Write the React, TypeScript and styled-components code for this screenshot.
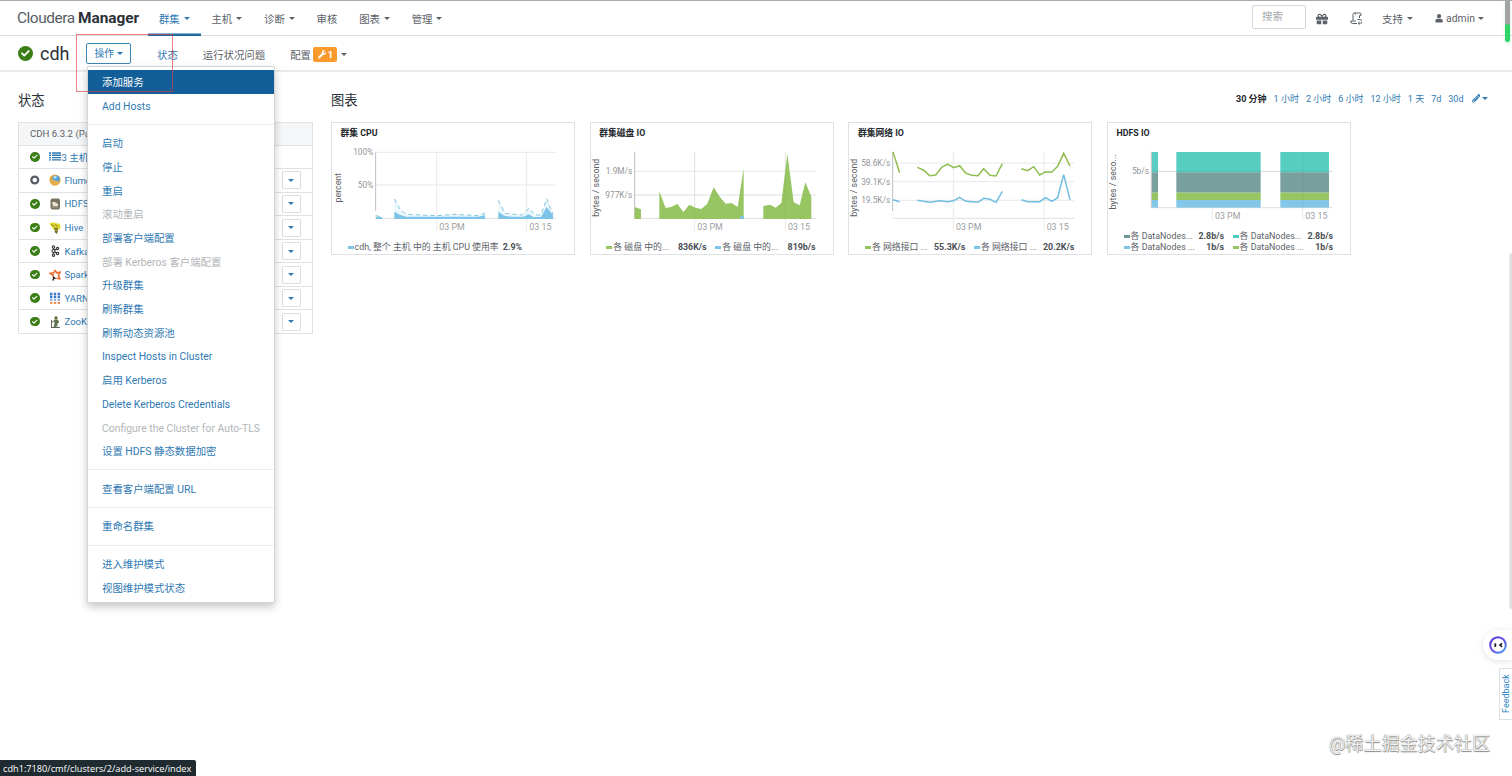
import React from "react";
import styled, { createGlobalStyle, css } from "styled-components";
import { FaGift, FaCheck, FaUser, FaPencilAlt, FaWrench } from "react-icons/fa";

const Global = createGlobalStyle`
  * { box-sizing: border-box; }
  body {
    margin: 0;
    background: #fff;
    font-family: Roboto, "Noto Sans CJK SC", sans-serif;
    font-size: 10.4px;
    color: #5c6268;
    overflow: hidden;
  }
`;

const blue = "#2f79b2";

const Page = styled.div`
  position: relative;
  width: 1512px;
  height: 776px;
  overflow: hidden;
  border-top: 1px solid #a9a9a9;
`;

const Caret = styled.i<{ $color?: string; $gap?: number }>`
  display: inline-block;
  flex: none;
  margin-left: ${(p) => p.$gap ?? 4}px;
  border: 3px solid transparent;
  border-top-color: ${(p) => p.$color ?? "currentColor"};
  border-bottom: 0;
`;

/* ---- top bar ---- */
const TopBar = styled.header`
  display: flex;
  align-items: stretch;
  height: 35px;
  border-bottom: 1px solid #dcdcdc;
  padding-left: 17px;
`;
const Brand = styled.div`
  width: 131px;
  padding-top: 1px;
  line-height: 33px;
  font-size: 15.4px;
  letter-spacing: -0.45px;
  color: #555c63;
  white-space: nowrap;
  b { color: #2b3138; font-weight: 700; letter-spacing: 0; }
`;
const NavItem = styled.a<{ $active?: boolean }>`
  display: flex;
  align-items: center;
  padding: 0 10.9px;
  height: 35px;
  ${(p) => p.$active && css`
    color: ${blue};
    box-shadow: inset 0 -2.5px 0 #1c6ba3;
  `}
`;
const TopRight = styled.div`
  display: flex;
  align-items: center;
  margin-left: auto;
  padding-right: 28px;
`;
const Search = styled.div`
  width: 54px;
  height: 24px;
  margin: -2px 10px 0 0;
  border: 1px solid #d4d6d8;
  border-radius: 2px;
  padding-left: 9px;
  line-height: 22px;
  color: #a3a6a9;
`;
const Tool = styled.span<{ $w: number }>`
  display: flex;
  align-items: center;
  width: ${(p) => p.$w}px;
  padding-top: 1px;
  white-space: nowrap;
`;

/* ---- cluster bar ---- */
const ClusterBar = styled.div`
  display: flex;
  align-items: center;
  height: 36px;
  border-bottom: 2px solid #e9e9e9;
  padding-left: 18px;
`;
const Status = styled.span<{ $size: number }>`
  display: inline-flex;
  align-items: center;
  justify-content: center;
  flex: none;
  width: ${(p) => p.$size}px;
  height: ${(p) => p.$size}px;
  border-radius: 50%;
  background: #3b7d17;
  color: #fff;
  font-size: ${(p) => p.$size * 0.58}px;
`;
const Stopped = styled.svg`
  width: 9.5px;
  height: 10px;
  flex: none;
`;
const ClusterName = styled.h1`
  width: 46px;
  margin: 1px 0 0 7px;
  font-size: 18px;
  font-weight: 400;
  line-height: 30px;
  color: #2b3138;
`;
const ActionWrap = styled.div`
  position: relative;
  margin-right: 26px;
`;
const ActionButton = styled.div`
  display: flex;
  align-items: center;
  width: 45px;
  height: 21px;
  padding-left: 7.5px;
  border: 1px solid #3d86b8;
  border-radius: 2px;
  color: ${blue};
  font-size: 9.8px;
`;
const Tab = styled.span<{ $active?: boolean }>`
  display: flex;
  align-items: center;
  margin-right: 25px;
  padding-top: 3px;
  color: ${(p) => (p.$active ? blue : "#5c6268")};
`;
const WarnBadge = styled.span`
  display: inline-flex;
  align-items: center;
  justify-content: center;
  gap: 1.5px;
  width: 24px;
  height: 15px;
  margin-left: 2.5px;
  border-radius: 2px;
  background: #fb9a2c;
  color: #fff;
  font-weight: 700;
  font-size: 9.5px;
`;

/* ---- dropdown menu ---- */
const Menu = styled.div`
  position: absolute;
  z-index: 5;
  left: 1px;
  top: 23px;
  width: 188px;
  height: 537px;
  padding-top: 3.5px;
  background: #fff;
  border: 1px solid #d3d5d7;
  border-radius: 2px;
  box-shadow: 0 4px 9px rgba(0, 0, 0, 0.22);
`;
const MenuItem = styled.a<{ $state?: string }>`
  display: block;
  height: 23.7px;
  line-height: 25.6px;
  padding-left: 14px;
  white-space: nowrap;
  color: ${(p) => (p.$state === "off" ? "#b2b5b7" : p.$state === "on" ? "#fff" : blue)};
  background: ${(p) => (p.$state === "on" ? "#125e99" : "transparent")};
`;
const Divider = styled.div`
  height: 13.9px;
  padding-top: 6.5px;
  &::after { content: ""; display: block; height: 1px; background: #ebecec; }
`;

/* ---- body ---- */
const Body = styled.main`
  display: flex;
  gap: 18px;
  padding: 16px 0 0 18px;
`;
const Side = styled.section`
  width: 295px;
`;
const Heading = styled.h2`
  margin: 0;
  height: 34px;
  line-height: 25px;
  font-size: 13.3px;
  font-weight: 400;
  color: #2b3138;
`;
const Services = styled.div`
  border: 1px solid #e0e1e2;
  font-size: 9.6px;
`;
const ServicesHead = styled.div`
  height: 21.6px;
  line-height: 21px;
  padding-left: 11px;
  background: #f4f6f7;
`;
const ServiceRow = styled.div`
  display: flex;
  align-items: center;
  height: 23.55px;
  padding: 0 11.5px 0 11px;
  border-top: 1px solid #e0e1e2;
  color: ${blue};
  white-space: nowrap;
`;
const ServiceIcon = styled.svg`
  flex: none;
  width: 12px;
  height: 12px;
  margin: 0 4px 0 9px;
`;
const HostsIcon = styled.svg`
  flex: none;
  width: 12px;
  height: 9px;
  margin: 0 1px 0 9px;
`;
const RowButton = styled.span`
  display: flex;
  align-items: center;
  justify-content: center;
  width: 19px;
  height: 18px;
  margin-left: auto;
  border: 1px solid #dcdfe1;
  border-radius: 1px;
`;
const ChartsArea = styled.section`
  width: 1160px;
`;
const ChartsHead = styled.div`
  display: flex;
  justify-content: space-between;
`;
const Ranges = styled.div`
  display: flex;
  align-items: center;
  gap: 7px;
  height: 21px;
  padding-right: 3px;
  font-size: 9px;
  color: ${blue};
  white-space: nowrap;
  b { color: #23282d; }
  span { display: inline-flex; align-items: center; }
`;
const Cards = styled.div`
  display: grid;
  grid-template-columns: repeat(4, 244px);
  gap: 14.7px;
`;
const Card = styled.article`
  height: 133px;
  border: 1px solid #e0e1e2;
  display: flex;
  flex-direction: column;
`;
const CardTitle = styled.h3`
  margin: 0;
  height: 19px;
  line-height: 20px;
  padding-left: 8.5px;
  font-size: 8.8px;
  font-weight: 700;
  color: #23282d;
`;
const Plot = styled.svg`
  display: block;
  flex: none;
  width: 242px;
  font-family: Roboto, sans-serif;
`;
const Legend = styled.div<{ $left: number }>`
  display: grid;
  grid-template-columns: max-content max-content;
  column-gap: 8.5px;
  padding: 1px 0 0 ${(p) => p.$left}px;
  font-size: 8.9px;
  line-height: 11.2px;
  white-space: nowrap;
`;
const LegendItem = styled.span<{ $w?: number; $color: string }>`
  display: flex;
  align-items: center;
  width: ${(p) => (p.$w ? p.$w + "px" : "auto")};
  &::before {
    content: "";
    width: 6px;
    height: 3px;
    margin-right: 1px;
    background: ${(p) => p.$color};
  }
  b { margin-left: auto; padding-left: 4px; font-weight: 700; color: #4a4f55; }
`;

/* ---- overlays ---- */
const Highlight = styled.div`
  position: absolute;
  z-index: 6;
  left: 76px;
  top: 33px;
  width: 97px;
  height: 58px;
  border: 1px solid rgba(222, 60, 66, 0.65);
`;
const StatusUrl = styled.div`
  position: absolute;
  left: 0;
  bottom: 0;
  width: 196px;
  height: 16px;
  padding-left: 3px;
  border-radius: 0 2px 0 0;
  background: #1f2b31;
  color: #fff;
  font: 9.2px/17px "Open Sans", sans-serif;
  white-space: nowrap;
`;
const Watermark = styled.div`
  position: absolute;
  right: 22px;
  top: 729px;
  font-size: 18.1px;
  line-height: 27px;
  color: #f1f1f1;
  text-shadow: 0 0 1px #777, 0.5px 0.5px 1px #888;
  white-space: nowrap;
`;
const Assistant = styled.div`
  position: absolute;
  right: 0;
  top: 629px;
  width: 29px;
  height: 30px;
  padding: 6px 0 0 6px;
  border-radius: 15px 0 0 15px;
  background: #fff;
  box-shadow: 0 1px 6px rgba(0, 0, 0, 0.13);
`;
const Feedback = styled.div`
  position: absolute;
  right: -1px;
  top: 667px;
  width: 14px;
  height: 52px;
  display: flex;
  align-items: center;
  justify-content: center;
  border: 1px solid #dde0e3;
  background: #fff;
  color: #2e86c0;
  font-size: 9px;
  writing-mode: vertical-rl;
  transform: rotate(180deg);
`;
const Meter = styled.div`
  position: absolute;
  left: 1505px;
  top: 0;
  width: 5px;
  height: 41px;
  border-radius: 0 0 2px 2px;
  background: linear-gradient(#a3a3a3 23px, #2fd467 24px);
  box-shadow: 0 2px 3px rgba(120, 220, 150, 0.35);
`;
const ScrollThumb = styled.div`
  position: absolute;
  right: 0;
  top: 252px;
  width: 2px;
  height: 356px;
  border-radius: 2px 0 0 2px;
  background: #dedede;
  box-shadow: -1px 0 1px #ededed;
`;

const menu: (string | [string, string] | null)[] = [
  ["添加服务", "on"], "Add Hosts", null,
  "启动", "停止", "重启", ["滚动重启", "off"], "部署客户端配置", ["部署 Kerberos 客户端配置", "off"],
  "升级群集", "刷新群集", "刷新动态资源池", "Inspect Hosts in Cluster", "启用 Kerberos",
  "Delete Kerberos Credentials", ["Configure the Cluster for Auto-TLS", "off"], "设置 HDFS 静态数据加密", null,
  "查看客户端配置 URL", null,
  "重命名群集", null,
  "进入维护模式", "视图维护模式状态",
];

const services: [string, React.ReactNode][] = [
  ["Flume", <g key="f"><circle cx="6" cy="6" r="5.6" fill="#e3a33b" /><circle cx="7" cy="5.2" r="3.7" fill="#4aa3dc" /><path d="M1 7c3-3 5 1 9 0-1 3-3 4.500-5 4.500S1.500 9.500 1 7" fill="#e8b04c" /><path d="M4 3l3-1.500 1 1.500-2 2z" fill="#bfe3f5" /></g>],
  ["HDFS", <g key="h"><rect x="1.500" y="0.500" width="9.500" height="11" rx="2" fill="#7c7461" /><path d="M3 4h3l3 2v2H4z" fill="#e6e2d4" /><path d="M3 9h6" stroke="#b1a98f" /></g>],
  ["Hive", <g key="v"><path d="M0.300 1.500l4-1.200 3 1 3.500.5 1 3-1 2.500-3 .5-4-1-1.500-2.500z" fill="#e8dd35" /><path d="M2 2.500l4 2M6.500 2l1.500 2.500M9 3.500l1 1" stroke="#6d6a1c" strokeWidth=".8" fill="none" /><path d="M5 6l3.500-.5.500 2.500-1 4-2-1.500z" fill="#6d6a2a" /><path d="M5.500 8h3" stroke="#e8dd35" strokeWidth=".8" /></g>],
  ["Kafka", <g key="k" fill="#fff" stroke="#333" strokeWidth="1.100"><path d="M4.500 3v6M5 5.500l3-2M5 6.500l3 2" /><circle cx="4.500" cy="2" r="1.200" /><circle cx="4.500" cy="6" r="1.500" /><circle cx="4.500" cy="10.200" r="1.200" /><circle cx="8.600" cy="3.500" r="1.100" /><circle cx="8.600" cy="8.500" r="1.100" /></g>],
  ["Spark", <g key="s" fill="none" stroke="#ee6a2c" strokeWidth="1.500"><path d="M6.200 1l1.300 2.800 3.700-.6-1.800 3 1.400 3.600-3.400-.6M4 8.500l.2-2.500L.9 4.400l3.800-.6L6.200 1" /><path d="M4 11.500l.8-3 1.800 1.300" stroke="#222" strokeWidth="1.400" /></g>],
  ["YARN", <g key="y"><path d="M1 2h10M1 5h10" stroke="#3c78c8" strokeWidth="2.400" strokeDasharray="2.400 1.400" /><path d="M1 8h10" stroke="#8fb1dd" strokeWidth="2" strokeDasharray="2.400 1.400" /><path d="M1 10.800h10" stroke="#ed7d31" strokeWidth="1.800" strokeDasharray="2.400 1.400" /></g>],
  ["ZooKeeper", <g key="z"><circle cx="7" cy="1.800" r="1.500" fill="#6b5a2c" /><path d="M5 3.500h4l1 3-1.500 1V11.500H7.500V9l-1 2.500H4.500L5.500 8z" fill="#5d7350" /><path d="M2.500 4v7.500M2.500 6.500l3-2" stroke="#6d6a55" strokeWidth="1" /><path d="M2 11.500h9" stroke="#444" strokeWidth=".8" /></g>],
];

type Frame = { x0: number; x1: number; y0: number; base: number; v: number[]; ticks: [number, string][]; unit: string; unitX: number; unitY: number; axisEnd?: number };

/* Plots are drawn on a grid three times finer than the screen. */
const Axes = ({ f }: { f: Frame }) => (
  <g>
    {f.ticks.map(([y]) => <path key={y} d={`M${f.x0} ${y}H${f.x1}`} stroke="#e3e4e5" strokeWidth="3" opacity=".8" />)}
    {f.v.map((x) => <path key={x} d={`M${x} ${f.y0}V${f.base + 38}`} stroke="#e6e7e8" strokeWidth="3" opacity=".8" />)}
    <path d={`M${f.x0} ${f.base}H${f.x1}`} stroke="#dedfe0" strokeWidth="3" />
    <path d={`M${f.x0} ${f.y0}V${f.axisEnd ?? f.base}`} stroke="#bcbec0" strokeWidth="3" />
    {f.ticks.map(([y, t]) => <text key={t} x={f.x0 - 7} y={y + 9} textAnchor="end" fontSize="25" fill="#939699">{t}</text>)}
    <text x={f.v[0] + 8} y={f.base + 34} fontSize="26.500" fill="#9b9ea1">03 PM</text>
    <text x={f.v[1] + 8} y={f.base + 34} fontSize="26.500" fill="#9b9ea1">03 15</text>
    <text transform={`translate(${f.unitX} ${f.unitY}) rotate(-90)`} textAnchor="middle" fontSize="26.500" fill="#5c6166">{f.unit}</text>
  </g>
);

const green = "#96c561";
const sky = "#7ec4e8";

const Dashboard = () => (
  <Cards>
    <Card>
      <CardTitle>群集 CPU</CardTitle>
      <Plot viewBox="21 171 726 297" height={99}>
        <Axes f={{ x0: 152, x1: 693, y0: 202, base: 400, v: [335, 605], ticks: [[202, "100%"], [300, "50%"]], unit: "percent", unitX: 47, unitY: 308, axisEnd: 378 }} />
        <path d="M208 342L226 374 243 388 335 392 390 388 460 392 480 384V400H208zM520 346L540 385 590 390 612 370 630 390 648 390 665 341 684 388V400H520z" fill="#eaf8fc" />
        <path d="M152 395L172 397V402H152zM208 380L226 390 243 395H460L480 390V402H208zM520 380L538 392 560 395H595L611 388 625 396H648L665 366 684 390V402H520z" fill={sky} />
        <path d="M152 392L172 396M208 342L226 374 243 388 335 392 390 388 460 392 480 384M520 346L540 385 590 390 612 370 630 390 648 390 665 341 684 388" fill="none" stroke="#85c3dc" strokeWidth="3" strokeDasharray="13 9" />
      </Plot>
      <Legend $left={15.5}><LegendItem $color={sky}>cdh, 整个 主机 中的 主机 CPU 使用率 <b>2.9%</b></LegendItem></Legend>
    </Card>
    <Card>
      <CardTitle>群集磁盘 IO</CardTitle>
      <Plot viewBox="33 81 726 297" height={99}>
        <Axes f={{ x0: 164, x1: 708, y0: 110, base: 310, v: [344, 616], ticks: [[169, "1.9M/s"], [240, "977K/s"]], unit: "bytes / second", unitX: 56, unitY: 218 }} />
        <path d="M164 276L183 283V312H164zM238 229L257 279 274 276 292 266 310 291 328 269 346 278 364 282 382 266 401 217 419 245 437 266 455 264 473 276 491 160V312H238zM550 273L571 269 587 278 604 264 622 116 641 262 659 271 676 202 694 245V312H550z" fill={green} />
        <path d="M480 303H491V312H480z" fill={sky} />
        <path d="M616 110V310M344 110V310M164 240H708" stroke="#777" strokeWidth="2" opacity=".1" />
      </Plot>
      <Legend $left={15.5}>
        <LegendItem $w={100.5} $color={green}>各 磁盘 中的... <b>836K/s</b></LegendItem>
        <LegendItem $w={100.5} $color={sky}>各 磁盘 中的... <b>819b/s</b></LegendItem>
      </Legend>
    </Card>
    <Card>
      <CardTitle>群集网络 IO</CardTitle>
      <Plot viewBox="27 81 726 297" height={99}>
        <Axes f={{ x0: 158, x1: 702, y0: 110, base: 310, v: [340, 612], ticks: [[144, "58.6K/s"], [200, "39.1K/s"], [256, "19.5K/s"]], unit: "bytes / second", unitX: 52, unitY: 218, axisEnd: 288 }} />
        <path d="M159 111L179 173M232 157L250 165 269 182 287 180 305 157 323 147 341 158 359 152 377 174 395 181 414 182 431 161 450 181 468 183 487 146M544 161L563 167 581 155 599 180 617 170 635 172 653 154 671 115 690 153" fill="none" stroke="#90bd50" strokeWidth="4.500" />
        <path d="M159 254L179 260M232 256L250 259 270 262 300 257 323 260 341 257 359 247 377 259 414 262 431 250 450 253 468 262 487 229M544 254L563 260 599 260 617 248 635 259 653 248 671 179 690 254" fill="none" stroke="#70bde2" strokeWidth="4.500" />
      </Plot>
      <Legend $left={15.5}>
        <LegendItem $w={100.5} $color={green}>各 网络接口 ... <b>55.3K/s</b></LegendItem>
        <LegendItem $w={100.5} $color={sky}>各 网络接口 ... <b>20.2K/s</b></LegendItem>
      </Legend>
    </Card>
    <Card>
      <CardTitle>HDFS IO</CardTitle>
      <Plot viewBox="24 81 726 264" height={88}>
        <Axes f={{ x0: 154, x1: 698, y0: 110, base: 278, v: [337, 608], ticks: [[169, "5b/s"]], unit: "bytes / seco...", unitX: 48, unitY: 201 }} />
        {[[156, 18], [229, 253], [541, 146]].map(([x, w]) => (
          <g key={x}>
            <rect x={x} y="111" width={w} height="62" fill="#58cdc2" />
            <rect x={x} y="172" width={w} height="61" fill="#7aa09e" />
            <rect x={x} y="233" width={w} height="22" fill={green} />
            <rect x={x} y="255" width={w} height="23" fill="#84c6e8" />
          </g>
        ))}
        <path d="M608 110V278M154 169H698" stroke="#555" strokeWidth="2" opacity=".15" />
      </Plot>
      <Legend $left={15.5}>
        <LegendItem $w={100.5} $color="#6b9794">各 DataNodes... <b>2.8b/s</b></LegendItem>
        <LegendItem $w={100.5} $color="#4dc9bd">各 DataNodes... <b>2.8b/s</b></LegendItem>
        <LegendItem $w={100.5} $color={sky}>各 DataNodes ... <b>1b/s</b></LegendItem>
        <LegendItem $w={100.5} $color={green}>各 DataNodes ... <b>1b/s</b></LegendItem>
      </Legend>
    </Card>
  </Cards>
);

export default function App() {
  return (
    <Page>
      <Global />
      <TopBar>
        <Brand>Cloudera <b>Manager</b></Brand>
        <NavItem $active>群集<Caret /></NavItem>
        <NavItem>主机<Caret /></NavItem>
        <NavItem>诊断<Caret /></NavItem>
        <NavItem>审核</NavItem>
        <NavItem>图表<Caret /></NavItem>
        <NavItem>管理<Caret /></NavItem>
        <TopRight>
          <Search>搜索</Search>
          <Tool $w={34}><FaGift size={12} /></Tool>
          <Tool $w={32}>
            <svg width="12" height="13" viewBox="0 0 12 13" fill="none" stroke="currentColor" strokeWidth="1">
              <path d="M3 8.500V2.500Q3 1 4.500 1H10M4.500 1q1.200 0 1.200 1.500M10 1q1.500 0 1 2.500H9.500V6M.7 9h5.300M.7 9q0 2.500 1.800 2.500H7" />
              <path d="M7.500 7.500h2.800a1.600 1.600 0 010 3.800H8.500M9.600 9.800L8 11.300l1.600 1.500" />
            </svg>
          </Tool>
          <Tool $w={53}>支持<Caret /></Tool>
          <Tool $w={49}><FaUser size={8.5} style={{ marginRight: 3 }} />admin<Caret $gap={3} /></Tool>
        </TopRight>
      </TopBar>

      <ClusterBar>
        <Status $size={15}><FaCheck /></Status>
        <ClusterName>cdh</ClusterName>
        <ActionWrap>
          <ActionButton>操作<Caret $gap={3} /></ActionButton>
          <Menu>
            {menu.map((m, i) =>
              m === null ? <Divider key={i} /> :
              typeof m === "string" ? <MenuItem key={i}>{m}</MenuItem> :
              <MenuItem key={i} $state={m[1]}>{m[0]}</MenuItem>
            )}
          </Menu>
        </ActionWrap>
        <Tab $active>状态</Tab>
        <Tab>运行状况问题</Tab>
        <Tab>配置<WarnBadge><FaWrench size={8.5} />1</WarnBadge><Caret $gap={4} /></Tab>
      </ClusterBar>

      <Body>
        <Side>
          <Heading>状态</Heading>
          <Services>
            <ServicesHead>CDH 6.3.2 (Pa</ServicesHead>
            <ServiceRow>
              <Status $size={9.5}><FaCheck /></Status>
              <HostsIcon viewBox="0 0 12 9"><path d="M0 1h2M0 3.300h2M0 5.600h2M0 7.900h2M3 1h9M3 3.300h9M3 5.600h9M3 7.900h9" stroke="currentColor" strokeWidth="1.400" /></HostsIcon>
              3 主机
            </ServiceRow>
            {services.map(([name, icon], i) => (
              <ServiceRow key={name}>
                {i === 0
                  ? <Stopped viewBox="0 0 10 10"><circle cx="5" cy="5" r="3.600" fill="#fff" stroke="#555c63" strokeWidth="2.400" /></Stopped>
                  : <Status $size={9.5}><FaCheck /></Status>}
                <ServiceIcon viewBox="0 0 12 12">{icon}</ServiceIcon>
                {name}
                <RowButton><Caret $gap={0} /></RowButton>
              </ServiceRow>
            ))}
          </Services>
        </Side>
        <ChartsArea>
          <ChartsHead>
            <Heading>图表</Heading>
            <Ranges>
              <b>30 分钟</b><span>1 小时</span><span>2 小时</span><span>6 小时</span><span>12 小时</span>
              <span>1 天</span><span>7d</span><span>30d</span>
              <span><FaPencilAlt size={8.5} style={{ marginLeft: 1 }} /><Caret $gap={2} /></span>
            </Ranges>
          </ChartsHead>
          <Dashboard />
        </ChartsArea>
      </Body>

      <Highlight />
      <Meter />
      <ScrollThumb />
      <Assistant>
        <svg width="18" height="18" viewBox="0 0 18 18">
          <defs>
            <linearGradient id="ring" x1="0" y1="0" x2="1" y2="1">
              <stop offset="0" stopColor="#5436d6" />
              <stop offset=".5" stopColor="#6c4be8" />
              <stop offset="1" stopColor="#3ba4f0" />
            </linearGradient>
          </defs>
          <circle cx="9" cy="9" r="7.800" fill="#fff" stroke="url(#ring)" strokeWidth="2" />
          <path d="M6.300 7.300v3.600" stroke="#1c1c2b" strokeWidth="1.800" />
          <path d="M13 7.300l-2 1.800 2 1.800" stroke="#1c1c2b" strokeWidth="1.600" fill="none" />
        </svg>
      </Assistant>
      <Feedback>Feedback</Feedback>
      <Watermark>@稀土掘金技术社区</Watermark>
      <StatusUrl>cdh1:7180/cmf/clusters/2/add-service/index</StatusUrl>
    </Page>
  );
}
